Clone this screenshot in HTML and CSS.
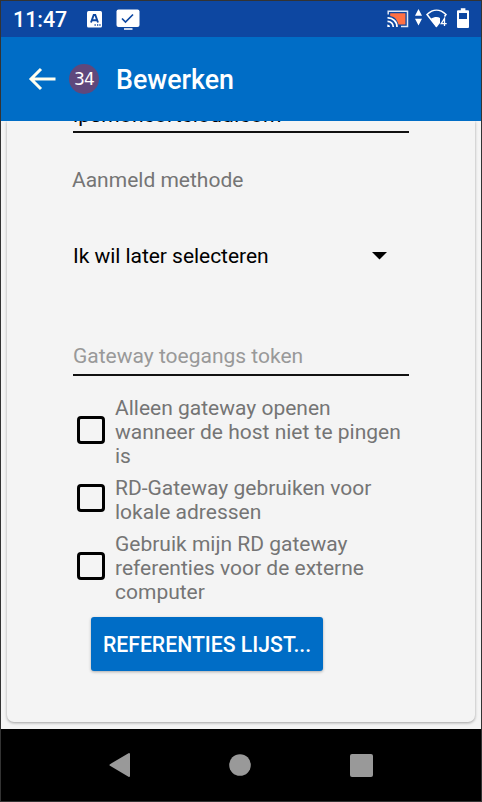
FILE: index.html
```html
<!DOCTYPE html>
<html lang="nl">
<head>
<meta charset="utf-8">
<title>Bewerken</title>
<link rel="stylesheet" href="styles.css">
</head>
<body>
<div class="device">
  <header class="status">
    <span class="clock">11:47</span>
    <svg class="ic-a" width="15" height="17" viewBox="0 0 15 17"><rect width="15" height="16.500" rx="1.500" fill="#fff"/><path d="M4 11.500 6.700 4h1.600L11 11.500M5 9.200h5" fill="none" stroke="#0d47a1" stroke-width="1.900"/><path d="M7.500 14h1.300M10 14h1.300M12.300 14h1.300" stroke="#0d47a1" stroke-width="1.300"/></svg>
    <svg class="ic-check" width="24" height="22" viewBox="0 0 24 22"><rect x=".5" y=".5" width="23" height="17.500" rx="2" fill="#fff"/><path d="M6 9.500 9.500 13 17 5.500" fill="none" stroke="#0d47a1" stroke-width="1.700"/><path d="M8 20h8.500" stroke="#dce6f5" stroke-width="1.800"/></svg>
    <svg class="ic-cast" width="22" height="18" viewBox="0 0 22 18"><path d="M3.200 3.300h15.200v11.200H11.500C10 9.500 8 7 3.200 6z" fill="#ff7043"/><path d="M1.200 4.500V1.200h19.300v15.300H14" fill="none" stroke="#dfe7f5" stroke-width="1.500"/><path d="M.5 7.800a9 9 0 0 1 9.500 9.200M.5 11.300A5.700 5.700 0 0 1 6.300 17" fill="none" stroke="#fff" stroke-width="1.700"/><path d="M.3 14.500A2.500 2.500 0 0 1 3 17H.3z" fill="#fff"/></svg>
    <svg class="ic-data" width="7" height="17" viewBox="0 0 7 17"><path d="M3.500 0 7 6.800H0zM0 9.800h7L3.500 16.500z" fill="#fff"/></svg>
    <svg class="ic-wifi" width="22" height="19" viewBox="0 0 22 19"><path d="M10.500 17.500 1 5.500C7-.2 14-.2 20 5.500L18.500 7.500" fill="none" stroke="#fff" stroke-width="1.500"/><path d="M4.800 9.800c3.500-2.200 7-2.200 9.200-.8V14l-3.500 4.500z" fill="#fff"/><path d="M18.500 17V9.500L15.200 14.700H20.700" fill="none" stroke="#fff" stroke-width="1.300"/></svg>
    <svg class="ic-bat" width="12" height="20" viewBox="0 0 12 20"><path d="M1 2.200h2.800V.3h4.600v1.900H11a1 1 0 0 1 1 1V19a1 1 0 0 1-1 1H1a1 1 0 0 1-1-1V3.200a1 1 0 0 1 1-1z" fill="#fff"/><path d="M2 5h8v6H2z" fill="#0d47a1"/></svg>
  </header>
  <div class="appbar">
    <svg class="back" width="28" height="24" viewBox="0 0 28 24"><path d="M27.500 12H3M13 2 3 12 13 22" fill="none" stroke="#fffff0" stroke-width="3"/></svg>
    <span class="count">34</span>
    <h1 class="title">Bewerken</h1>
  </div>
  <main class="content">
    <section class="card">
      <div class="field field-top"><span class="value">lpsmoncortcloud.com</span></div>
      <div class="label">Aanmeld methode</div>
      <div class="select"><span>Ik wil later selecteren</span><svg width="15" height="8" viewBox="0 0 15 8"><path d="M0 0h15L7.500 7.500z"/></svg></div>
      <div class="field field-token"><span class="hint">Gateway toegangs token</span></div>
      <div class="options">
        <div class="option"><i class="box"></i><span>Alleen gateway openen<br>wanneer de host niet te pingen<br>is</span></div>
        <div class="option"><i class="box"></i><span>RD-Gateway gebruiken voor<br>lokale adressen</span></div>
        <div class="option"><i class="box"></i><span>Gebruik mijn RD gateway<br>referenties voor de externe<br>computer</span></div>
      </div>
      <div class="button">REFERENTIES LIJST...</div>
    </section>
  </main>
  <nav class="nav">
    <svg width="22" height="26" viewBox="0 0 22 26"><path d="M21 2v22L2.500 13z" fill="#999" stroke="#999" stroke-width="2" stroke-linejoin="round"/></svg>
    <svg width="22" height="22" viewBox="0 0 22 22"><circle cx="11" cy="11" r="10.800" fill="#999"/></svg>
    <svg width="23" height="23" viewBox="0 0 23 23"><rect width="23" height="23" rx="2" fill="#999"/></svg>
  </nav>
</div>
</body>
</html>
```
FILE: styles.css
```css
* { box-sizing: border-box; }
body { margin: 0; font-family: Roboto, "Liberation Sans", sans-serif; font-size: 21px; }
svg { display: block; flex: none; }
.device { width: 482px; height: 802px; border: 1px solid #333; display: flex; flex-direction: column; overflow: hidden; white-space: nowrap; }
.status { height: 36px; flex: none; background: #0d47a1; display: flex; align-items: flex-start; padding-left: 12px; }
.clock { width: 74px; color: #fff; font-size: 21.4px; font-weight: 500; line-height: 38px; }
.ic-a { margin-top: 10px; }
.ic-check { margin: 8px 0 0 14px; }
.ic-cast { margin: 9px 0 0 247px; }
.ic-data { margin: 8px 0 0 6px; }
.ic-wifi { margin: 8px 0 0 4px; }
.ic-bat { margin: 7px 0 0 9px; }
.appbar { height: 84px; flex: none; background: #006dc6; display: flex; align-items: center; padding-left: 27px; }
.count { width: 30px; height: 30px; border-radius: 50%; background: #5f487c; color: #fff; font: 17px/30px "DejaVu Sans", sans-serif; letter-spacing: -.8px; text-align: center; margin: -1px 0 0 13px; }
.title { margin: 2px 0 0 17px; color: #fff; font-size: 26.800px; font-weight: 500; line-height: 36px; }
.content { height: 608px; flex: none; background: #f4f4f4; padding: 0 6px 7px; overflow: hidden; display: flex; }
.card { width: 468px; height: 601px; background: #f4f4f4; border-radius: 0 0 7px 7px; box-shadow: 0 1px 3px rgba(0,0,0,.35); padding: 0 66px; }
.field { border-bottom: 2px solid #111; display: flex; align-items: flex-end; line-height: 24px; }
.field-top { height: 12px; }
.value { margin-bottom: 4px; letter-spacing: .15px; }
.label { margin: 35px 0 0 -1px; line-height: 24px; color: #757575; }
.select { margin-top: 52px; line-height: 24px; display: flex; justify-content: space-between; align-items: center; padding-right: 22px; }
.select svg { margin-top: -1px; }
.select span { letter-spacing: -.04px; }
.field-token { margin-top: 76px; height: 32px; }
.hint { color: #999; margin-bottom: 6px; }
.options { margin-top: 20px; display: flex; flex-direction: column; gap: 8px; }
.option { display: flex; align-items: center; line-height: 24px; color: #757575; }
.box { width: 28px; height: 28px; flex: none; border: 3px solid #000; border-radius: 4px; margin: -4px 10px 0 4px; }
.button { width: 232px; height: 54px; margin: 13px 0 0 18px; background: #006dc6; color: #fff; border-radius: 3px; box-shadow: 0 1px 3px rgba(0,0,0,.3); font-size: 21.200px; font-weight: 500; line-height: 56px; text-align: center; }
.nav { height: 72px; flex: none; background: #000; display: flex; align-items: center; padding-left: 107px; gap: 99px; }
```
